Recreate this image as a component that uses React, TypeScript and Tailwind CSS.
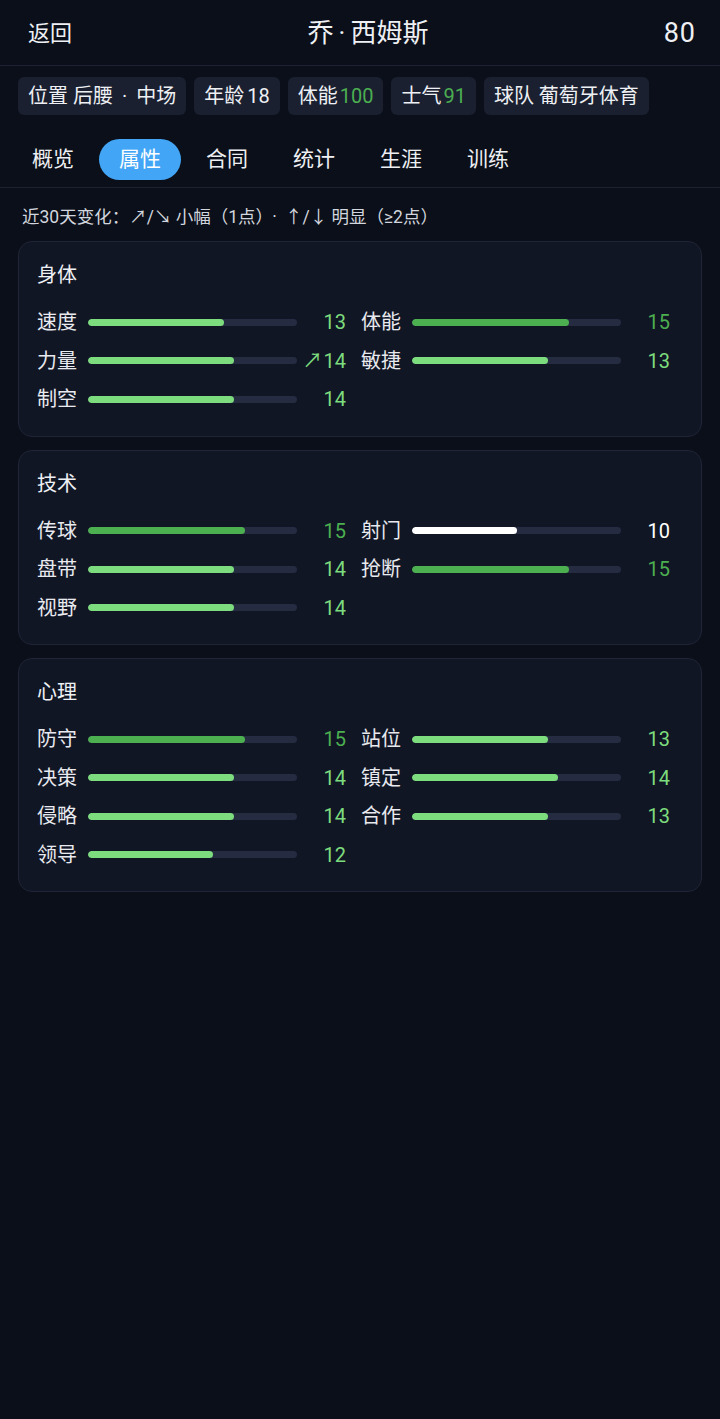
import React from 'react';

type Attr = { name: string; value: number; trend?: string };

const SECTIONS: { title: string; attrs: Attr[] }[] = [
  {
    title: '身体',
    attrs: [
      { name: '速度', value: 13 },
      { name: '体能', value: 15 },
      { name: '力量', value: 14, trend: '↗' },
      { name: '敏捷', value: 13 },
      { name: '制空', value: 14 },
    ],
  },
  {
    title: '技术',
    attrs: [
      { name: '传球', value: 15 },
      { name: '射门', value: 10 },
      { name: '盘带', value: 14 },
      { name: '抢断', value: 15 },
      { name: '视野', value: 14 },
    ],
  },
  {
    title: '心理',
    attrs: [
      { name: '防守', value: 15 },
      { name: '站位', value: 13 },
      { name: '决策', value: 14 },
      { name: '镇定', value: 14 },
      { name: '侵略', value: 14 },
      { name: '合作', value: 13 },
      { name: '领导', value: 12 },
    ],
  },
];

const TABS = ['概览', '属性', '合同', '统计', '生涯', '训练'];

const tone = (v: number) => {
  if (v >= 15) return { bar: 'bg-[#4caf50]', text: 'text-[#4caf50]' };
  if (v >= 11) return { bar: 'bg-[#7ddc7d]', text: 'text-[#7ddc7d]' };
  return { bar: 'bg-white', text: 'text-white' };
};

const AttrRow: React.FC<{ attr: Attr }> = ({ attr }) => {
  const t = tone(attr.value);
  return (
    <div className="flex items-center h-[38.5px]">
      <div className="w-[40px] shrink-0 text-[20px] leading-none text-[#e8eaef]">{attr.name}</div>
      <div className="ml-[11px] flex-1 h-[7px] rounded-full bg-[#252b40] overflow-hidden">
        <div className={`h-full rounded-full ${t.bar}`} style={{ width: `${(attr.value / 20) * 100}%` }} />
      </div>
      <div className={`w-[49px] shrink-0 text-right text-[20px] leading-none ${t.text}`}>
        {attr.trend && <span className="mr-[1px]">{attr.trend}</span>}
        {attr.value}
      </div>
    </div>
  );
};

const chip = 'h-[38px] px-[10px] rounded-[6px] bg-[#1a2030] flex items-center text-[20px]';

export default function App() {
  return (
    <div
      className="min-h-[1419px] w-[720px] bg-[#0b0f19] text-[#eef0f4]"
      style={{ fontFamily: 'Roboto, "Noto Sans CJK SC", sans-serif' }}
    >
      <header className="h-[66px] border-b border-[#1c2233] px-[28px] pt-[2px] flex items-center">
        <div className="flex-1 text-[22px]">返回</div>
        <div className="ml-[12px] text-[26px]">
          乔<span className="mx-[5px]">·</span>西姆斯
        </div>
        <div className="flex-1 text-right text-[27px] tracking-[1px] -mr-[4px]">80</div>
      </header>

      <div className="flex gap-[8px] px-[18px] pt-[11px]">
        <div className={chip}>
          位置 后腰<span className="mx-[9px]">·</span>中场
        </div>
        <div className={chip}>
          年龄<span className="ml-[3px]">18</span>
        </div>
        <div className={chip}>
          体能<span className="ml-[2px] text-[#4caf50]">100</span>
        </div>
        <div className={chip}>
          士气<span className="ml-[2px] text-[#4caf50]">91</span>
        </div>
        <div className={chip}>球队 葡萄牙体育</div>
      </div>

      <nav className="flex gap-[5px] px-[12px] pt-[24px] pb-[7px] border-b border-[#1c2233]">
        {TABS.map((tab) => (
          <div
            key={tab}
            className={`h-[41px] px-[20px] rounded-full flex items-center text-[21px] ${
              tab === '属性' ? 'bg-[#42a5f5] text-white' : 'text-[#eef0f4]'
            }`}
          >
            {tab}
          </div>
        ))}
      </nav>

      <div className="px-[22px] pt-[19px] text-[17.5px] leading-[20px] text-[#d2d6de]">
        近30天变化：↗/↘ 小幅（1点）<span className="mx-[8px]">·</span>↑/↓ 明显（≥2点）
      </div>

      <div className="mx-[18px] mt-[14px] flex flex-col gap-[13px]">
        {SECTIONS.map((s) => (
          <section key={s.title} className="rounded-[14px] border border-[#1f2537] bg-[#111625] pl-[18px] pt-[19px] pb-[17px]">
            <div className="text-[20px] leading-[28px] text-[#eef0f4]">{s.title}</div>
            <div className="mt-[14px] grid grid-cols-[309px_309px] gap-x-[15px]">
              {s.attrs.map((a) => (
                <AttrRow key={a.name} attr={a} />
              ))}
            </div>
          </section>
        ))}
      </div>
    </div>
  );
}
